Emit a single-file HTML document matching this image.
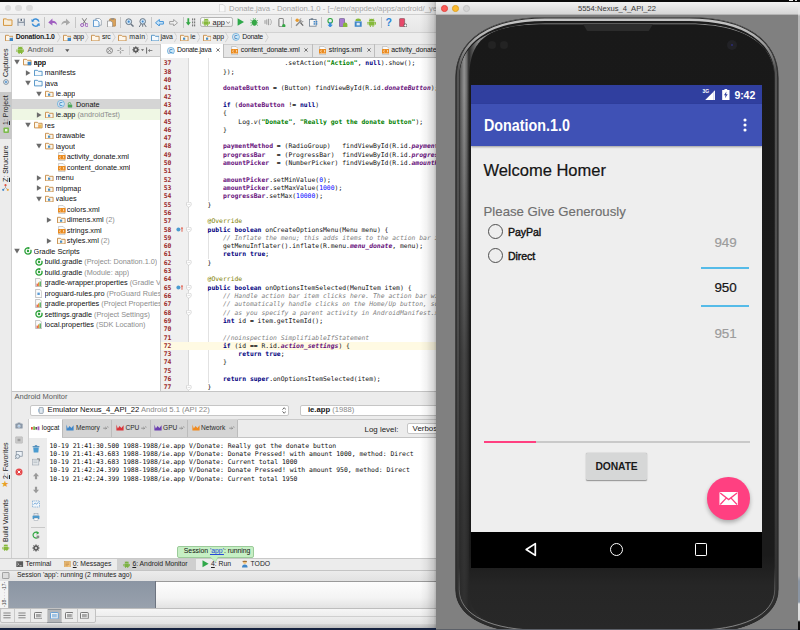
<!DOCTYPE html>
<html><head><meta charset="utf-8"><title>Donate.java - Donation.1.0</title>
<style>
*{margin:0;padding:0;box-sizing:border-box}
html,body{width:800px;height:630px;overflow:hidden;background:#1b2a4a}
body{position:relative;font-family:"Liberation Sans", sans-serif;color:#111}
.a{position:absolute}
.t{position:absolute;white-space:pre;line-height:1}
/* IDE */
#ide{position:absolute;left:0;top:0;width:437px;height:630px;background:#ececec;overflow:hidden}
.ui{font-size:7.3px;color:#1a1a1a}
.tree .t{font-size:7.3px;color:#111;height:10.5px;line-height:10.5px}
.tree .g{color:#8c8c8c}
.code{font-family:"DejaVu Sans Mono", "Liberation Mono", monospace;font-size:6.4px;}
.code .ln{position:absolute;left:192.2px;white-space:pre;height:8.308px;line-height:8.308px;color:#111}
.code .no{position:absolute;left:163.7px;white-space:pre;height:8.308px;line-height:8.308px;color:#9b2a2a;font-weight:bold;font-size:6.4px}
.k{color:#000080;font-weight:bold}
.s{color:#008000;font-weight:bold}
.f{color:#660e7a;font-weight:bold}
.fi{color:#660e7a;font-weight:bold;font-style:italic}
.c{color:#808080;font-style:italic}
.n{color:#0000ff}
.an{color:#808000}
.log{font-family:"DejaVu Sans Mono", "Liberation Mono", monospace;font-size:6.45px;color:#111}
.log .t{height:8.25px;line-height:8.25px}
.vt{position:absolute;white-space:pre;font-size:7px;color:#222;transform-origin:0 0;transform:rotate(-90deg);line-height:10px;height:10px}
/* phone */
#emu{position:absolute;left:436.2px;top:0;width:364px;height:630px;overflow:hidden}
</style></head>
<body>
<div id="ide">
<div class="a" style="left:0.00px;top:0.00px;width:437.00px;height:1.60px;background:#0b0b0b;"></div>
<div class="a" style="left:0.00px;top:1.60px;width:437.00px;height:12.40px;background:linear-gradient(#f7f7f7,#f1f1f1);"></div>
<div class="a" style="left:4.50px;top:4.70px;width:6.80px;height:6.80px;background:#dcdcdc;border-radius:50%"></div>
<div class="a" style="left:15.40px;top:4.70px;width:6.80px;height:6.80px;background:#dcdcdc;border-radius:50%"></div>
<div class="a" style="left:26.20px;top:4.70px;width:6.80px;height:6.80px;background:#dcdcdc;border-radius:50%"></div>
<svg class="a" style="left:219.30px;top:3.60px" width="6.4" height="8.4" viewBox="0 0 6.4 8.4"><path d="M0.4 0.4h3.6l2 2v5.6h-5.6z" fill="#fafafa" stroke="#c4c4c4" stroke-width="0.6"/></svg>
<div class="t" style="left:229.10px;top:4.50px;font-size:7.7px;color:#a4a4a4;letter-spacing:0.002px">Donate.java - Donation.1.0 - [~/env/appdev/apps/android/_yea</div>
<div class="a" style="left:0.00px;top:14.00px;width:437.00px;height:17.60px;background:linear-gradient(#efefef,#e7e7e7);border-top:0.5px solid #d0d0d0"></div>
<div class="a" style="left:44.20px;top:16.50px;width:0.60px;height:11.50px;background:#c6c6c6;"></div>
<div class="a" style="left:75.30px;top:16.50px;width:0.60px;height:11.50px;background:#c6c6c6;"></div>
<div class="a" style="left:119.90px;top:16.50px;width:0.60px;height:11.50px;background:#c6c6c6;"></div>
<div class="a" style="left:151.30px;top:16.50px;width:0.60px;height:11.50px;background:#c6c6c6;"></div>
<div class="a" style="left:182.50px;top:16.50px;width:0.60px;height:11.50px;background:#c6c6c6;"></div>
<div class="a" style="left:291.20px;top:16.50px;width:0.60px;height:11.50px;background:#c6c6c6;"></div>
<div class="a" style="left:321.20px;top:16.50px;width:0.60px;height:11.50px;background:#c6c6c6;"></div>
<div class="a" style="left:380.70px;top:16.50px;width:0.60px;height:11.50px;background:#c6c6c6;"></div>
<svg class="a" style="left:3.20px;top:18.30px" width="9.6" height="8" viewBox="0 0 9.6 8"><path d="M0.5 0.9h3l0.9 1h4.6v5.5h-8.5z" fill="#f7ecd8" stroke="#d5973f" stroke-width="1" stroke-linejoin="round"/></svg>
<svg class="a" style="left:17.00px;top:18.10px" width="8.4" height="8.4" viewBox="0 0 8.4 8.4"><rect x="0.4" y="0.4" width="7.6" height="7.6" rx="0.7" fill="#8d98a6"/><rect x="1.8" y="0.4" width="4.8" height="3.2" fill="#f3f3f3"/><rect x="3.6" y="0.9" width="1.3" height="2" fill="#3e4e63"/><rect x="1.5" y="5" width="5.4" height="3" fill="#dfe3e8"/></svg>
<svg class="a" style="left:31.00px;top:17.70px" width="9.2" height="9.2" viewBox="0 0 9.2 9.2"><path d="M7.9 3.6A3.5 3.5 0 0 0 1.6 2.6M1.3 5.6A3.5 3.5 0 0 0 7.6 6.6" fill="none" stroke="#3a8ed8" stroke-width="1.5"/><path d="M0.2 1.2l0.6 3 2.8-1.2zM9 8l-0.6-3-2.8 1.2z" fill="#3a8ed8"/></svg>
<svg class="a" style="left:48.40px;top:18.30px" width="9.4" height="8" viewBox="0 0 9.4 8"><path d="M0.3 4.4L4.4 0.6v2.2c3 0 4.6 1.6 4.6 4.4-1-1.7-2.3-2.2-4.6-2.2v2.4z" fill="#a05fc0"/></svg>
<svg class="a" style="left:61.40px;top:18.30px" width="9.4" height="8" viewBox="0 0 9.4 8"><path d="M9.1 4.4L5 0.6v2.2c-3 0-4.6 1.6-4.6 4.4 1-1.7 2.3-2.2 4.6-2.2v2.4z" fill="#a9a9a9"/></svg>
<svg class="a" style="left:79.60px;top:17.70px" width="8.8" height="9.2" viewBox="0 0 8.8 9.2"><path d="M2.2 0.3L6 6M6.6 0.3L2.8 6" stroke="#6e6e6e" stroke-width="0.9"/><circle cx="2.1" cy="7.1" r="1.5" fill="none" stroke="#a05fc0" stroke-width="1"/><circle cx="6.7" cy="7.1" r="1.5" fill="none" stroke="#a05fc0" stroke-width="1"/></svg>
<svg class="a" style="left:93.20px;top:17.70px" width="8.8" height="9.2" viewBox="0 0 8.8 9.2"><path d="M2.8 0.5h3.6l1.9 1.9v4.8h-5.5z" fill="#fff" stroke="#7d8a98" stroke-width="0.7"/><path d="M0.5 2.2h3.6l1.9 1.9v4.6h-5.5z" fill="#f3f8fd" stroke="#3f86c8" stroke-width="0.8"/></svg>
<svg class="a" style="left:107.40px;top:17.50px" width="9" height="9.6" viewBox="0 0 9 9.6"><rect x="2.6" y="0.8" width="6" height="7.4" rx="0.6" fill="#d9a25a" stroke="#a9743a" stroke-width="0.6"/><rect x="4.2" y="0.2" width="2.8" height="1.4" fill="#8a8a8a"/><path d="M0.5 3h3.4l1.7 1.7v4.5h-5.1z" fill="#fafafa" stroke="#8a8a8a" stroke-width="0.7"/></svg>
<svg class="a" style="left:124.60px;top:17.70px" width="9" height="9.2" viewBox="0 0 9 9.2"><circle cx="3.7" cy="3.7" r="2.9" fill="#cfe6f8" stroke="#6b7683" stroke-width="1"/><path d="M5.9 5.9l2.6 2.7" stroke="#6b7683" stroke-width="1.4"/><circle cx="3.7" cy="3.7" r="1.1" fill="#3f86c8"/></svg>
<svg class="a" style="left:138.00px;top:17.70px" width="9.4" height="9.4" viewBox="0 0 9.4 9.4"><circle cx="4.7" cy="3.4" r="2.8" fill="#cfe6f8" stroke="#6b7683" stroke-width="1"/><circle cx="4.7" cy="3.4" r="1" fill="#3f86c8"/><path d="M3.2 5.8L1.2 9M6.2 5.8l2 3.2M4.7 6.2v2.6" stroke="#6b7683" stroke-width="1"/></svg>
<svg class="a" style="left:155.20px;top:18.50px" width="9" height="7.6" viewBox="0 0 9 7.6"><path d="M0.5 3.8L4.4 0.5v2h4v2.6h-4v2z" fill="#c7e2f6" stroke="#3a8ed8" stroke-width="0.9" stroke-linejoin="round"/></svg>
<svg class="a" style="left:169.30px;top:18.50px" width="9" height="7.6" viewBox="0 0 9 7.6"><path d="M8.5 3.8L4.6 0.5v2h-4v2.6h4v2z" fill="#efefef" stroke="#9a9a9a" stroke-width="0.9" stroke-linejoin="round"/></svg>
<svg class="a" style="left:186.20px;top:17.90px" width="9.6" height="8.8" viewBox="0 0 9.6 8.8"><path d="M1.4 0.2h1.8v4h1.6L2.3 7.6-0.2 4.2h1.6z" fill="#35a745"/><g fill="#7a7a7a"><rect x="6" y="0.4" width="1.2" height="2"/><rect x="8" y="0.4" width="1.2" height="2"/><rect x="6" y="3.4" width="1.2" height="2"/><rect x="8" y="3.4" width="1.2" height="2"/><rect x="6" y="6.4" width="1.2" height="2"/><rect x="8" y="6.4" width="1.2" height="2"/></g></svg>
<div class="a" style="left:199.70px;top:17.30px;width:33.70px;height:10.20px;background:linear-gradient(#fbfbfb,#e9e9e9);border:0.6px solid #b4b4b4;border-radius:2.2px"></div>
<svg class="a" style="left:202.40px;top:18.10px" width="8.4" height="8.4" viewBox="0 0 10 10"><path d="M2 3.4a3 2.6 0 0 1 6 0z" fill="#86b93b"/><rect x="2" y="3.8" width="6" height="4.2" rx="0.6" fill="#86b93b"/><rect x="0.5" y="3.9" width="1.1" height="3.2" rx="0.5" fill="#86b93b"/><rect x="8.4" y="3.9" width="1.1" height="3.2" rx="0.5" fill="#86b93b"/><rect x="3" y="7.6" width="1.2" height="2" rx="0.5" fill="#86b93b"/><rect x="5.8" y="7.6" width="1.2" height="2" rx="0.5" fill="#86b93b"/><path d="M2.8 0.4l0.9 1.3M7.2 0.4L6.3 1.7" stroke="#86b93b" stroke-width="0.5"/></svg>
<div class="t" style="left:212.60px;top:18.60px;font-size:7.4px;color:#222">app</div>
<svg class="a" style="left:225.60px;top:21.10px" width="4.4" height="3" viewBox="0 0 4.4 3"><path d="M0.3 0.4L2.2 2.5 4.1 0.4" fill="none" stroke="#6a6a6a" stroke-width="0.8"/></svg>
<svg class="a" style="left:237.00px;top:18.30px" width="7.4" height="8" viewBox="0 0 7.4 8"><path d="M0.6 0.3L7 4 0.6 7.7z" fill="#2fa84a"/></svg>
<svg class="a" style="left:249.60px;top:18.10px" width="8.8" height="8.4" viewBox="0 0 8.8 8.4"><ellipse cx="4.4" cy="4.6" rx="2.5" ry="3.1" fill="#35a745"/><path d="M0.4 2l2 1.4M8.4 2l-2 1.4M0.2 4.8h2M8.6 4.8h-2M0.6 7.8l1.8-1.4M8.2 7.8L6.4 6.4M3.2 0.2l0.6 1.3M5.6 0.2L5 1.5" stroke="#35a745" stroke-width="0.7"/></svg>
<svg class="a" style="left:263.60px;top:18.30px" width="9" height="8" viewBox="0 0 9 8"><path d="M1 2.2v3.6M2.8 1.4v5.2M4.6 0.8v6.4" stroke="#9a9a9a" stroke-width="1"/><path d="M6 1a4 4 0 0 1 0 6" fill="none" stroke="#b4b4b4" stroke-width="1"/></svg>
<svg class="a" style="left:278.00px;top:17.50px" width="7.6" height="9.6" viewBox="0 0 7.6 9.6"><rect x="0.9" y="0.4" width="4.4" height="8.4" rx="0.8" fill="#f1f1f1" stroke="#5b5b5b" stroke-width="0.8"/><circle cx="5.8" cy="7.8" r="1.7" fill="#35a745"/></svg>
<svg class="a" style="left:294.60px;top:17.90px" width="9" height="8.8" viewBox="0 0 9 8.8"><path d="M1 7.8L6.4 2.2" stroke="#8b8b8b" stroke-width="1.4"/><circle cx="2.2" cy="2.2" r="1.7" fill="#e79a2e"/><path d="M5.4 4.6l2.8 3" stroke="#5f5f5f" stroke-width="1.2"/><path d="M6.2 0.6a1.8 1.8 0 1 0 2 2.4" fill="none" stroke="#8b8b8b" stroke-width="1"/></svg>
<svg class="a" style="left:309.00px;top:17.90px" width="9" height="8.8" viewBox="0 0 9 8.8"><rect x="0.5" y="1.4" width="6.6" height="6.8" fill="#f6f6f6" stroke="#6f7d8c" stroke-width="0.8"/><rect x="1.6" y="0.3" width="2.6" height="1.6" fill="#6f7d8c"/><g fill="#3f86c8"><rect x="4.6" y="3" width="1.5" height="1.5"/><rect x="6.8" y="3" width="1.5" height="1.5"/><rect x="4.6" y="5.2" width="1.5" height="1.5"/><rect x="6.8" y="5.2" width="1.5" height="1.5"/></g></svg>
<svg class="a" style="left:325.80px;top:17.50px" width="8.4" height="9.6" viewBox="0 0 8.4 9.6"><circle cx="4.2" cy="2.8" r="2.3" fill="none" stroke="#35a745" stroke-width="1.1"/><path d="M3 4.6h2.4v2.2h1.5L4.2 9.6 1.5 6.8H3z" fill="#3a8ed8"/></svg>
<svg class="a" style="left:339.20px;top:17.50px" width="8.8" height="9.6" viewBox="0 0 8.8 9.6"><rect x="0.5" y="0.4" width="5" height="8.4" rx="0.8" fill="#a77bd0" stroke="#6c5a8c" stroke-width="0.7"/><path d="M4 6.6a2.2 2 0 0 1 4.4 0v2.6H4z" fill="#86b93b"/></svg>
<svg class="a" style="left:353.80px;top:17.70px" width="8.4" height="9.4" viewBox="0 0 8.4 9.4"><path d="M1.4 3a2.8 2.4 0 0 1 5.6 0z" fill="#86b93b"/><rect x="0.7" y="3.4" width="7" height="5.4" fill="#3f86c8"/><rect x="2.6" y="4.8" width="3.2" height="2.6" fill="#dbeaf7"/></svg>
<svg class="a" style="left:367.30px;top:17.60px" width="9.4" height="9.4" viewBox="0 0 10 10"><path d="M2 3.4a3 2.6 0 0 1 6 0z" fill="#86b93b"/><rect x="2" y="3.8" width="6" height="4.2" rx="0.6" fill="#86b93b"/><rect x="0.5" y="3.9" width="1.1" height="3.2" rx="0.5" fill="#86b93b"/><rect x="8.4" y="3.9" width="1.1" height="3.2" rx="0.5" fill="#86b93b"/><rect x="3" y="7.6" width="1.2" height="2" rx="0.5" fill="#86b93b"/><rect x="5.8" y="7.6" width="1.2" height="2" rx="0.5" fill="#86b93b"/><path d="M2.8 0.4l0.9 1.3M7.2 0.4L6.3 1.7" stroke="#86b93b" stroke-width="0.5"/></svg>
<div class="t" style="left:385.60px;top:16.60px;font-size:10.5px;font-weight:bold;color:#2f86d6">?</div>
<svg class="a" style="left:398.60px;top:17.50px" width="8.6" height="9.6" viewBox="0 0 8.6 9.6"><rect x="0.6" y="0.4" width="5" height="8.4" rx="0.8" fill="#e8486a" stroke="#8a5560" stroke-width="0.7"/><circle cx="6.4" cy="7.4" r="1.5" fill="#fff" stroke="#444" stroke-width="0.7"/></svg>
<div class="a" style="left:0.00px;top:31.60px;width:437.00px;height:12.00px;background:#ededed;border-top:0.5px solid #d2d2d2"></div>
<svg class="a" style="left:4.80px;top:33.50px" width="8.6" height="7.4" viewBox="0 0 8.6 7.4"><path d="M0.5 1.3h3l0.9 1h3.7v4.6h-7.6z" fill="#fdf6ea" stroke="#c58a45" stroke-width="0.9" stroke-linejoin="round"/><rect x="4.6" y="3.8" width="3.6" height="3.4" fill="#3d86c6"/></svg>
<div class="t" style="left:15.75px;top:34.10px;font-size:6.9px;color:#1a1a1a;letter-spacing:-0.196px;font-weight:bold;">Donation.1.0</div>
<svg class="a" style="left:57.20px;top:32.20px" width="3.6" height="10.4" viewBox="0 0 3.6 10.4"><path d="M0.3 0.2L3.2 5.2 0.3 10.2" fill="none" stroke="#bdbdbd" stroke-width="0.6"/></svg>
<svg class="a" style="left:62.55px;top:33.50px" width="8.6" height="7.4" viewBox="0 0 8.6 7.4"><path d="M0.5 1.3h3l0.9 1h3.7v4.6h-7.6z" fill="#fdf6ea" stroke="#c58a45" stroke-width="0.9" stroke-linejoin="round"/><rect x="4.6" y="3.8" width="3.6" height="3.4" fill="#3d86c6"/></svg>
<div class="t" style="left:73.15px;top:34.10px;font-size:6.9px;color:#1a1a1a;letter-spacing:-0.338px;">app</div>
<svg class="a" style="left:85.20px;top:32.20px" width="3.6" height="10.4" viewBox="0 0 3.6 10.4"><path d="M0.3 0.2L3.2 5.2 0.3 10.2" fill="none" stroke="#bdbdbd" stroke-width="0.6"/></svg>
<svg class="a" style="left:91.10px;top:33.50px" width="8.6" height="7.4" viewBox="0 0 8.6 7.4"><path d="M0.5 1.3h3l0.9 1h3.7v4.6h-7.6z" fill="#fdf6ea" stroke="#c58a45" stroke-width="0.9" stroke-linejoin="round"/></svg>
<div class="t" style="left:102.00px;top:34.10px;font-size:6.9px;color:#1a1a1a;letter-spacing:-0.199px;">src</div>
<svg class="a" style="left:112.30px;top:32.20px" width="3.6" height="10.4" viewBox="0 0 3.6 10.4"><path d="M0.3 0.2L3.2 5.2 0.3 10.2" fill="none" stroke="#bdbdbd" stroke-width="0.6"/></svg>
<svg class="a" style="left:118.20px;top:33.50px" width="8.6" height="7.4" viewBox="0 0 8.6 7.4"><path d="M0.5 1.3h3l0.9 1h3.7v4.6h-7.6z" fill="#fdf6ea" stroke="#c58a45" stroke-width="0.9" stroke-linejoin="round"/></svg>
<div class="t" style="left:129.20px;top:34.10px;font-size:6.9px;color:#1a1a1a;letter-spacing:0.311px;">main</div>
<svg class="a" style="left:144.70px;top:32.20px" width="3.6" height="10.4" viewBox="0 0 3.6 10.4"><path d="M0.3 0.2L3.2 5.2 0.3 10.2" fill="none" stroke="#bdbdbd" stroke-width="0.6"/></svg>
<svg class="a" style="left:150.70px;top:33.50px" width="8.6" height="7.4" viewBox="0 0 8.6 7.4"><path d="M0.5 1.3h3l0.9 1h3.7v4.6h-7.6z" fill="#f4f9fd" stroke="#4b8fc4" stroke-width="0.9" stroke-linejoin="round"/></svg>
<div class="t" style="left:160.60px;top:34.10px;font-size:6.9px;color:#1a1a1a;letter-spacing:-0.115px;">java</div>
<svg class="a" style="left:173.90px;top:32.20px" width="3.6" height="10.4" viewBox="0 0 3.6 10.4"><path d="M0.3 0.2L3.2 5.2 0.3 10.2" fill="none" stroke="#bdbdbd" stroke-width="0.6"/></svg>
<svg class="a" style="left:180.20px;top:33.50px" width="8.6" height="7.4" viewBox="0 0 8.6 7.4"><path d="M0.5 1.3h3l0.9 1h3.7v4.6h-7.6z" fill="#fdf6ea" stroke="#c58a45" stroke-width="0.9" stroke-linejoin="round"/><rect x="3" y="3.6" width="2.2" height="2.2" fill="#4b8fc4"/></svg>
<div class="t" style="left:190.30px;top:34.10px;font-size:6.9px;color:#1a1a1a;letter-spacing:-0.185px;">ie</div>
<svg class="a" style="left:196.50px;top:32.20px" width="3.6" height="10.4" viewBox="0 0 3.6 10.4"><path d="M0.3 0.2L3.2 5.2 0.3 10.2" fill="none" stroke="#bdbdbd" stroke-width="0.6"/></svg>
<svg class="a" style="left:202.70px;top:33.50px" width="8.6" height="7.4" viewBox="0 0 8.6 7.4"><path d="M0.5 1.3h3l0.9 1h3.7v4.6h-7.6z" fill="#fdf6ea" stroke="#c58a45" stroke-width="0.9" stroke-linejoin="round"/><rect x="3" y="3.6" width="2.2" height="2.2" fill="#4b8fc4"/></svg>
<div class="t" style="left:212.80px;top:34.10px;font-size:6.9px;color:#1a1a1a;letter-spacing:-0.138px;">app</div>
<svg class="a" style="left:225.00px;top:32.20px" width="3.6" height="10.4" viewBox="0 0 3.6 10.4"><path d="M0.3 0.2L3.2 5.2 0.3 10.2" fill="none" stroke="#bdbdbd" stroke-width="0.6"/></svg>
<svg class="a" style="left:232.10px;top:33.30px" width="7.8" height="7.8" viewBox="0 0 7.8 7.8"><circle cx="3.9" cy="3.9" r="3.5" fill="#d4eaf8" stroke="#5aa2d6" stroke-width="0.7"/><text x="3.9" y="5.65" font-size="5" font-family="Liberation Sans, sans-serif" font-weight="bold" text-anchor="middle" fill="#3a7fb8">C</text></svg>
<div class="t" style="left:242.30px;top:34.10px;font-size:6.9px;color:#1a1a1a;letter-spacing:-0.275px;">Donate</div>
<svg class="a" style="left:265.30px;top:32.20px" width="3.6" height="10.4" viewBox="0 0 3.6 10.4"><path d="M0.3 0.2L3.2 5.2 0.3 10.2" fill="none" stroke="#bdbdbd" stroke-width="0.6"/></svg>
<div class="a" style="left:0.00px;top:43.60px;width:11.60px;height:515.00px;background:#ececec;border-right:0.5px solid #cfcfcf"></div>
<div class="a" style="left:0.00px;top:91.80px;width:11.60px;height:47.20px;background:#c9c9c9;"></div>
<div class="vt" style="left:0.6px;top:77.2px;">Captures</div>
<svg class="a" style="left:2.60px;top:79.00px" width="6" height="6" viewBox="0 0 6 6"><circle cx="3" cy="3" r="2.4" fill="#dfeaf4" stroke="#6f7d8c" stroke-width="0.8"/><circle cx="3" cy="3" r="0.9" fill="#3f86c8"/></svg>
<div class="vt" style="left:0.6px;top:125.4px;"><u>1</u>: Project</div>
<svg class="a" style="left:2.60px;top:127.40px" width="6.4" height="6.4" viewBox="0 0 6.4 6.4"><rect x="0.4" y="0.4" width="5.6" height="5.6" rx="1" fill="#7dbb4d"/><rect x="2" y="2" width="2.4" height="2.4" fill="#e9f5df"/></svg>
<div class="vt" style="left:0.6px;top:182.0px;"><u>Z</u>: Structure</div>
<svg class="a" style="left:2.40px;top:183.60px" width="7" height="7" viewBox="0 0 7 7"><path d="M3.5 1.2v2.2M3.5 3.4L1.2 5.8M3.5 3.4l2.3 2.4" stroke="#8a8a8a" stroke-width="0.6"/><circle cx="3.5" cy="1.2" r="1.1" fill="#e0523f"/><circle cx="1.2" cy="5.8" r="1.1" fill="#3f86c8"/><circle cx="5.8" cy="5.8" r="1.1" fill="#e9a23b"/></svg>
<div class="vt" style="left:0.6px;top:479.4px;"><u>2</u>: Favorites</div>
<div class="t" style="left:1.20px;top:479.60px;font-size:8.6px;color:#e9a024">★</div>
<div class="vt" style="left:0.6px;top:541.6px;">Build Variants</div>
<svg class="a" style="left:2.00px;top:543.80px" width="7.6" height="7.6" viewBox="0 0 10 10"><path d="M2 3.4a3 2.6 0 0 1 6 0z" fill="#86b93b"/><rect x="2" y="3.8" width="6" height="4.2" rx="0.6" fill="#86b93b"/><rect x="0.5" y="3.9" width="1.1" height="3.2" rx="0.5" fill="#86b93b"/><rect x="8.4" y="3.9" width="1.1" height="3.2" rx="0.5" fill="#86b93b"/><rect x="3" y="7.6" width="1.2" height="2" rx="0.5" fill="#86b93b"/><rect x="5.8" y="7.6" width="1.2" height="2" rx="0.5" fill="#86b93b"/><path d="M2.8 0.4l0.9 1.3M7.2 0.4L6.3 1.7" stroke="#86b93b" stroke-width="0.5"/></svg>
<div class="a" style="left:11.60px;top:43.60px;width:149.00px;height:13.60px;background:#e9e9e9;border-top:0.5px solid #cfcfcf;border-bottom:0.5px solid #c9c9c9"></div>
<svg class="a" style="left:15.70px;top:45.90px" width="8.6" height="8.6" viewBox="0 0 10 10"><path d="M2 3.4a3 2.6 0 0 1 6 0z" fill="#86b93b"/><rect x="2" y="3.8" width="6" height="4.2" rx="0.6" fill="#86b93b"/><rect x="0.5" y="3.9" width="1.1" height="3.2" rx="0.5" fill="#86b93b"/><rect x="8.4" y="3.9" width="1.1" height="3.2" rx="0.5" fill="#86b93b"/><rect x="3" y="7.6" width="1.2" height="2" rx="0.5" fill="#86b93b"/><rect x="5.8" y="7.6" width="1.2" height="2" rx="0.5" fill="#86b93b"/><path d="M2.8 0.4l0.9 1.3M7.2 0.4L6.3 1.7" stroke="#86b93b" stroke-width="0.5"/></svg>
<div class="t" style="left:27.40px;top:46.40px;font-size:7.6px;color:#555">Android</div>
<svg class="a" style="left:65.40px;top:49.20px" width="4.6" height="3.2" viewBox="0 0 4.6 3.2"><path d="M0.2 0.3h4.2L2.3 2.9z" fill="#555"/></svg>
<svg class="a" style="left:105.60px;top:46.60px" width="7.2" height="7.2" viewBox="0 0 7.2 7.2"><circle cx="3.6" cy="3.6" r="2.9" fill="none" stroke="#7a7a7a" stroke-width="0.9"/><path d="M2.3 2.3l2.6 2.6M4.9 2.3L2.3 4.9" stroke="#7a7a7a" stroke-width="0.8"/></svg>
<svg class="a" style="left:117.20px;top:46.60px" width="7" height="7" viewBox="0 0 7 7"><path d="M3.5 0.3v2.2M3.5 6.7V4.5M0.3 3.5h2.2M6.7 3.5H4.5" stroke="#8a8a8a" stroke-width="0.7"/><path d="M2.6 1.6l0.9 0.9 0.9-0.9M2.6 5.4l0.9-0.9 0.9 0.9" fill="none" stroke="#8a8a8a" stroke-width="0.6"/></svg>
<div class="a" style="left:128.60px;top:46.00px;width:0.50px;height:9.00px;background:#cfcfcf;"></div>
<svg class="a" style="left:132.40px;top:46.40px" width="7.6" height="7.6" viewBox="0 0 7.6 7.6"><circle cx="3.8" cy="3.8" r="2" fill="none" stroke="#5a5a5a" stroke-width="1.5"/><path d="M3.8 0.2v7.2M0.2 3.8h7.2M1.3 1.3l5 5M6.3 1.3l-5 5" stroke="#5a5a5a" stroke-width="0.9"/><circle cx="3.8" cy="3.8" r="1" fill="#e9e9e9"/></svg>
<svg class="a" style="left:141.00px;top:49.40px" width="3" height="2" viewBox="0 0 3 2"><path d="M0 0.2h3L1.5 1.9z" fill="#5a5a5a"/></svg>
<svg class="a" style="left:146.00px;top:46.80px" width="7" height="7" viewBox="0 0 7 7"><path d="M0.6 0.4v6.2" stroke="#5a5a5a" stroke-width="0.9"/><path d="M6.4 3.5H2.6M4 2.2L2.6 3.5 4 4.8" fill="none" stroke="#5a5a5a" stroke-width="0.7"/></svg>
<div class="a" style="left:11.60px;top:57.20px;width:149.00px;height:333.60px;background:#ffffff;"></div>
<div class="a" style="left:160.20px;top:43.60px;width:0.60px;height:347.00px;background:#c9c9c9;"></div>
<div class="tree">
<svg class="a" style="left:13.50px;top:59.10px" width="6" height="6" viewBox="0 0 6 6"><path d="M0.2 0.8h5.6L3 5.4z" fill="#6b6b6b"/></svg>
<svg class="a" style="left:23.20px;top:58.40px" width="8.6" height="7.4" viewBox="0 0 8.6 7.4"><path d="M0.5 1.3h3l0.9 1h3.7v4.6h-7.6z" fill="#fdf6ea" stroke="#c58a45" stroke-width="0.9" stroke-linejoin="round"/><rect x="4.6" y="3.8" width="3.6" height="3.4" fill="#3d86c6"/></svg>
<div class="t" style="left:33.50px;top:57.55px;max-width:126.7px;overflow:hidden;font-weight:bold;letter-spacing:-0.15px;">app</div>
<svg class="a" style="left:24.50px;top:69.61px" width="6" height="6" viewBox="0 0 6 6"><path d="M0.9 0.2v5.6L5.5 3z" fill="#6b6b6b"/></svg>
<svg class="a" style="left:34.20px;top:68.91px" width="8.6" height="7.4" viewBox="0 0 8.6 7.4"><path d="M0.5 1.3h3l0.9 1h3.7v4.6h-7.6z" fill="#f4f9fd" stroke="#4b8fc4" stroke-width="0.9" stroke-linejoin="round"/></svg>
<div class="t" style="left:44.50px;top:68.06px;max-width:115.7px;overflow:hidden;">manifests</div>
<svg class="a" style="left:24.50px;top:80.12px" width="6" height="6" viewBox="0 0 6 6"><path d="M0.2 0.8h5.6L3 5.4z" fill="#6b6b6b"/></svg>
<svg class="a" style="left:34.20px;top:79.42px" width="8.6" height="7.4" viewBox="0 0 8.6 7.4"><path d="M0.5 1.3h3l0.9 1h3.7v4.6h-7.6z" fill="#f4f9fd" stroke="#4b8fc4" stroke-width="0.9" stroke-linejoin="round"/></svg>
<div class="t" style="left:44.50px;top:78.57px;max-width:115.7px;overflow:hidden;">java</div>
<svg class="a" style="left:35.50px;top:90.63px" width="6" height="6" viewBox="0 0 6 6"><path d="M0.2 0.8h5.6L3 5.4z" fill="#6b6b6b"/></svg>
<svg class="a" style="left:45.20px;top:89.93px" width="8.6" height="7.4" viewBox="0 0 8.6 7.4"><path d="M0.5 1.3h3l0.9 1h3.7v4.6h-7.6z" fill="#fdf6ea" stroke="#c58a45" stroke-width="0.9" stroke-linejoin="round"/><rect x="3" y="3.6" width="2.2" height="2.2" fill="#4b8fc4"/></svg>
<div class="t" style="left:55.50px;top:89.08px;max-width:104.7px;overflow:hidden;">ie.app</div>
<div class="a" style="left:11.60px;top:98.89px;width:148.60px;height:10.51px;background:#d5d5d5;"></div>
<svg class="a" style="left:57.10px;top:100.24px" width="7.8" height="7.8" viewBox="0 0 7.8 7.8"><circle cx="3.9" cy="3.9" r="3.5" fill="#d4eaf8" stroke="#5aa2d6" stroke-width="0.7"/><text x="3.9" y="5.65" font-size="5" font-family="Liberation Sans, sans-serif" font-weight="bold" text-anchor="middle" fill="#3a7fb8">C</text></svg>
<svg class="a" style="left:67.20px;top:101.54px" width="6" height="6" viewBox="0 0 6 6"><path d="M1.2 2.6V1.8a1.3 1.3 0 0 1 2.6 0" fill="none" stroke="#4aa657" stroke-width="0.8"/><rect x="0.8" y="2.6" width="4.4" height="3" rx="0.5" fill="#4aa657"/></svg>
<div class="t" style="left:76.00px;top:99.59px;max-width:84.2px;overflow:hidden;">Donate</div>
<div class="a" style="left:11.60px;top:109.40px;width:148.60px;height:10.51px;background:#eff7e4;"></div>
<svg class="a" style="left:35.50px;top:111.65px" width="6" height="6" viewBox="0 0 6 6"><path d="M0.9 0.2v5.6L5.5 3z" fill="#6b6b6b"/></svg>
<svg class="a" style="left:45.20px;top:110.95px" width="8.6" height="7.4" viewBox="0 0 8.6 7.4"><path d="M0.5 1.3h3l0.9 1h3.7v4.6h-7.6z" fill="#fdf6ea" stroke="#c58a45" stroke-width="0.9" stroke-linejoin="round"/><rect x="3" y="3.6" width="2.2" height="2.2" fill="#4b8fc4"/></svg>
<div class="t" style="left:55.50px;top:110.10px;max-width:104.7px;overflow:hidden;">ie.app <span class="g">(androidTest)</span></div>
<svg class="a" style="left:24.50px;top:122.16px" width="6" height="6" viewBox="0 0 6 6"><path d="M0.2 0.8h5.6L3 5.4z" fill="#6b6b6b"/></svg>
<svg class="a" style="left:34.20px;top:121.46px" width="8.6" height="7.4" viewBox="0 0 8.6 7.4"><path d="M0.5 1.3h3l0.9 1h3.7v4.6h-7.6z" fill="#fdf6ea" stroke="#c58a45" stroke-width="0.9" stroke-linejoin="round"/><rect x="4.4" y="3.4" width="1.3" height="3.4" fill="#e98b1f"/><rect x="6.2" y="3.4" width="1.3" height="3.4" fill="#e2b23a"/></svg>
<div class="t" style="left:44.50px;top:120.61px;max-width:115.7px;overflow:hidden;">res</div>
<svg class="a" style="left:45.20px;top:131.97px" width="8.6" height="7.4" viewBox="0 0 8.6 7.4"><path d="M0.5 1.3h3l0.9 1h3.7v4.6h-7.6z" fill="#fdf6ea" stroke="#c58a45" stroke-width="0.9" stroke-linejoin="round"/><rect x="3" y="3.6" width="2.2" height="2.2" fill="#4b8fc4"/></svg>
<div class="t" style="left:55.50px;top:131.11px;max-width:104.7px;overflow:hidden;">drawable</div>
<svg class="a" style="left:35.50px;top:143.18px" width="6" height="6" viewBox="0 0 6 6"><path d="M0.2 0.8h5.6L3 5.4z" fill="#6b6b6b"/></svg>
<svg class="a" style="left:45.20px;top:142.48px" width="8.6" height="7.4" viewBox="0 0 8.6 7.4"><path d="M0.5 1.3h3l0.9 1h3.7v4.6h-7.6z" fill="#fdf6ea" stroke="#c58a45" stroke-width="0.9" stroke-linejoin="round"/><rect x="3" y="3.6" width="2.2" height="2.2" fill="#4b8fc4"/></svg>
<div class="t" style="left:55.50px;top:141.62px;max-width:104.7px;overflow:hidden;">layout</div>
<svg class="a" style="left:58.00px;top:152.19px" width="7.6" height="9" viewBox="0 0 7.6 9"><path d="M0.6 0.4h4.4l2 2v6.2h-6.4z" fill="#fbfbfb" stroke="#a9a9a9" stroke-width="0.6"/><rect x="0" y="3" width="7.6" height="4.4" rx="0.6" fill="#ea8a1e"/><path d="M2.7 4.1L1.5 5.2l1.2 1.1M4.9 4.1l1.2 1.1-1.2 1.1" stroke="#fff" stroke-width="0.7" fill="none"/></svg>
<div class="t" style="left:66.80px;top:152.13px;max-width:93.4px;overflow:hidden;">activity_donate.xml</div>
<svg class="a" style="left:58.00px;top:162.70px" width="7.6" height="9" viewBox="0 0 7.6 9"><path d="M0.6 0.4h4.4l2 2v6.2h-6.4z" fill="#fbfbfb" stroke="#a9a9a9" stroke-width="0.6"/><rect x="0" y="3" width="7.6" height="4.4" rx="0.6" fill="#ea8a1e"/><path d="M2.7 4.1L1.5 5.2l1.2 1.1M4.9 4.1l1.2 1.1-1.2 1.1" stroke="#fff" stroke-width="0.7" fill="none"/></svg>
<div class="t" style="left:66.80px;top:162.64px;max-width:93.4px;overflow:hidden;">content_donate.xml</div>
<svg class="a" style="left:35.50px;top:174.71px" width="6" height="6" viewBox="0 0 6 6"><path d="M0.9 0.2v5.6L5.5 3z" fill="#6b6b6b"/></svg>
<svg class="a" style="left:45.20px;top:174.01px" width="8.6" height="7.4" viewBox="0 0 8.6 7.4"><path d="M0.5 1.3h3l0.9 1h3.7v4.6h-7.6z" fill="#fdf6ea" stroke="#c58a45" stroke-width="0.9" stroke-linejoin="round"/><rect x="3" y="3.6" width="2.2" height="2.2" fill="#4b8fc4"/></svg>
<div class="t" style="left:55.50px;top:173.16px;max-width:104.7px;overflow:hidden;">menu</div>
<svg class="a" style="left:35.50px;top:185.22px" width="6" height="6" viewBox="0 0 6 6"><path d="M0.9 0.2v5.6L5.5 3z" fill="#6b6b6b"/></svg>
<svg class="a" style="left:45.20px;top:184.52px" width="8.6" height="7.4" viewBox="0 0 8.6 7.4"><path d="M0.5 1.3h3l0.9 1h3.7v4.6h-7.6z" fill="#fdf6ea" stroke="#c58a45" stroke-width="0.9" stroke-linejoin="round"/><rect x="3" y="3.6" width="2.2" height="2.2" fill="#4b8fc4"/></svg>
<div class="t" style="left:55.50px;top:183.66px;max-width:104.7px;overflow:hidden;">mipmap</div>
<svg class="a" style="left:35.50px;top:195.73px" width="6" height="6" viewBox="0 0 6 6"><path d="M0.2 0.8h5.6L3 5.4z" fill="#6b6b6b"/></svg>
<svg class="a" style="left:45.20px;top:195.03px" width="8.6" height="7.4" viewBox="0 0 8.6 7.4"><path d="M0.5 1.3h3l0.9 1h3.7v4.6h-7.6z" fill="#fdf6ea" stroke="#c58a45" stroke-width="0.9" stroke-linejoin="round"/><rect x="3" y="3.6" width="2.2" height="2.2" fill="#4b8fc4"/></svg>
<div class="t" style="left:55.50px;top:194.17px;max-width:104.7px;overflow:hidden;">values</div>
<svg class="a" style="left:58.00px;top:204.74px" width="7.6" height="9" viewBox="0 0 7.6 9"><path d="M0.6 0.4h4.4l2 2v6.2h-6.4z" fill="#fbfbfb" stroke="#a9a9a9" stroke-width="0.6"/><rect x="0" y="3" width="7.6" height="4.4" rx="0.6" fill="#ea8a1e"/><path d="M2.7 4.1L1.5 5.2l1.2 1.1M4.9 4.1l1.2 1.1-1.2 1.1" stroke="#fff" stroke-width="0.7" fill="none"/></svg>
<div class="t" style="left:66.80px;top:204.68px;max-width:93.4px;overflow:hidden;">colors.xml</div>
<svg class="a" style="left:46.40px;top:216.75px" width="6" height="6" viewBox="0 0 6 6"><path d="M0.9 0.2v5.6L5.5 3z" fill="#6b6b6b"/></svg>
<svg class="a" style="left:57.30px;top:216.05px" width="8.6" height="7.4" viewBox="0 0 8.6 7.4"><path d="M0.5 1.3h3l0.9 1h3.7v4.6h-7.6z" fill="#fdf6ea" stroke="#c58a45" stroke-width="0.9" stroke-linejoin="round"/><rect x="3" y="3.6" width="2.2" height="2.2" fill="#4b8fc4"/></svg>
<div class="t" style="left:66.80px;top:215.19px;max-width:93.4px;overflow:hidden;">dimens.xml <span class="g">(2)</span></div>
<svg class="a" style="left:58.00px;top:225.76px" width="7.6" height="9" viewBox="0 0 7.6 9"><path d="M0.6 0.4h4.4l2 2v6.2h-6.4z" fill="#fbfbfb" stroke="#a9a9a9" stroke-width="0.6"/><rect x="0" y="3" width="7.6" height="4.4" rx="0.6" fill="#ea8a1e"/><path d="M2.7 4.1L1.5 5.2l1.2 1.1M4.9 4.1l1.2 1.1-1.2 1.1" stroke="#fff" stroke-width="0.7" fill="none"/></svg>
<div class="t" style="left:66.80px;top:225.70px;max-width:93.4px;overflow:hidden;">strings.xml</div>
<svg class="a" style="left:46.40px;top:237.77px" width="6" height="6" viewBox="0 0 6 6"><path d="M0.9 0.2v5.6L5.5 3z" fill="#6b6b6b"/></svg>
<svg class="a" style="left:57.30px;top:237.07px" width="8.6" height="7.4" viewBox="0 0 8.6 7.4"><path d="M0.5 1.3h3l0.9 1h3.7v4.6h-7.6z" fill="#fdf6ea" stroke="#c58a45" stroke-width="0.9" stroke-linejoin="round"/><rect x="3" y="3.6" width="2.2" height="2.2" fill="#4b8fc4"/></svg>
<div class="t" style="left:66.80px;top:236.21px;max-width:93.4px;overflow:hidden;">styles.xml <span class="g">(2)</span></div>
<svg class="a" style="left:13.50px;top:248.28px" width="6" height="6" viewBox="0 0 6 6"><path d="M0.2 0.8h5.6L3 5.4z" fill="#6b6b6b"/></svg>
<svg class="a" style="left:23.50px;top:247.28px" width="8" height="8" viewBox="0 0 8 8"><circle cx="4" cy="4" r="3.1" fill="none" stroke="#2fa23c" stroke-width="1.3"/><rect x="4.6" y="-0.2" width="3.6" height="3" fill="#fff"/><path d="M3.6 -0.3L6.3 1 3.6 2.6z" fill="#2fa23c"/><circle cx="4" cy="4" r="1.2" fill="#2fa23c"/></svg>
<div class="t" style="left:33.50px;top:246.72px;max-width:126.7px;overflow:hidden;">Gradle Scripts</div>
<svg class="a" style="left:34.50px;top:257.79px" width="8" height="8" viewBox="0 0 8 8"><circle cx="4" cy="4" r="3.1" fill="none" stroke="#2fa23c" stroke-width="1.3"/><rect x="4.6" y="-0.2" width="3.6" height="3" fill="#fff"/><path d="M3.6 -0.3L6.3 1 3.6 2.6z" fill="#2fa23c"/><circle cx="4" cy="4" r="1.2" fill="#2fa23c"/></svg>
<div class="t" style="left:44.50px;top:257.24px;max-width:115.7px;overflow:hidden;">build.gradle <span class="g">(Project: Donation.1.0)</span></div>
<svg class="a" style="left:34.50px;top:268.30px" width="8" height="8" viewBox="0 0 8 8"><circle cx="4" cy="4" r="3.1" fill="none" stroke="#2fa23c" stroke-width="1.3"/><rect x="4.6" y="-0.2" width="3.6" height="3" fill="#fff"/><path d="M3.6 -0.3L6.3 1 3.6 2.6z" fill="#2fa23c"/><circle cx="4" cy="4" r="1.2" fill="#2fa23c"/></svg>
<div class="t" style="left:44.50px;top:267.75px;max-width:115.7px;overflow:hidden;">build.gradle <span class="g">(Module: app)</span></div>
<svg class="a" style="left:34.80px;top:278.31px" width="7.4" height="9" viewBox="0 0 7.4 9"><path d="M0.6 0.4h4.2l2 2v6.2h-6.2z" fill="#fbfbfb" stroke="#9a9a9a" stroke-width="0.6"/><rect x="1.6" y="5.6" width="1.2" height="2.6" fill="#d9453b"/><rect x="3.1" y="4.4" width="1.2" height="3.8" fill="#e98b1f"/><rect x="4.6" y="3.4" width="1.2" height="4.8" fill="#3ba14a"/></svg>
<div class="t" style="left:44.50px;top:278.25px;max-width:115.7px;overflow:hidden;">gradle-wrapper.properties <span class="g">(Gradle Version)</span></div>
<svg class="a" style="left:34.80px;top:288.82px" width="7.4" height="9" viewBox="0 0 7.4 9"><path d="M0.6 0.4h4.2l2 2v6.2h-6.2z" fill="#fbfbfb" stroke="#9a9a9a" stroke-width="0.6"/><rect x="2.4" y="3.6" width="2.4" height="2.4" fill="#5b9bd5"/></svg>
<div class="t" style="left:44.50px;top:288.76px;max-width:115.7px;overflow:hidden;">proguard-rules.pro <span class="g">(ProGuard Rules for app)</span></div>
<svg class="a" style="left:34.80px;top:299.33px" width="7.4" height="9" viewBox="0 0 7.4 9"><path d="M0.6 0.4h4.2l2 2v6.2h-6.2z" fill="#fbfbfb" stroke="#9a9a9a" stroke-width="0.6"/><rect x="1.6" y="5.6" width="1.2" height="2.6" fill="#d9453b"/><rect x="3.1" y="4.4" width="1.2" height="3.8" fill="#e98b1f"/><rect x="4.6" y="3.4" width="1.2" height="4.8" fill="#3ba14a"/></svg>
<div class="t" style="left:44.50px;top:299.27px;max-width:115.7px;overflow:hidden;">gradle.properties <span class="g">(Project Properties)</span></div>
<svg class="a" style="left:34.50px;top:310.34px" width="8" height="8" viewBox="0 0 8 8"><circle cx="4" cy="4" r="3.1" fill="none" stroke="#2fa23c" stroke-width="1.3"/><rect x="4.6" y="-0.2" width="3.6" height="3" fill="#fff"/><path d="M3.6 -0.3L6.3 1 3.6 2.6z" fill="#2fa23c"/><circle cx="4" cy="4" r="1.2" fill="#2fa23c"/></svg>
<div class="t" style="left:44.50px;top:309.79px;max-width:115.7px;overflow:hidden;">settings.gradle <span class="g">(Project Settings)</span></div>
<svg class="a" style="left:34.80px;top:320.35px" width="7.4" height="9" viewBox="0 0 7.4 9"><path d="M0.6 0.4h4.2l2 2v6.2h-6.2z" fill="#fbfbfb" stroke="#9a9a9a" stroke-width="0.6"/><rect x="1.6" y="5.6" width="1.2" height="2.6" fill="#d9453b"/><rect x="3.1" y="4.4" width="1.2" height="3.8" fill="#e98b1f"/><rect x="4.6" y="3.4" width="1.2" height="4.8" fill="#3ba14a"/></svg>
<div class="t" style="left:44.50px;top:320.30px;max-width:115.7px;overflow:hidden;">local.properties <span class="g">(SDK Location)</span></div>
</div>
<div class="a" style="left:160.80px;top:43.60px;width:276.20px;height:14.40px;background:#e6e6e6;border-top:0.5px solid #cfcfcf;border-bottom:0.6px solid #bdbdbd"></div>
<div class="a" style="left:161.00px;top:43.80px;width:63.00px;height:14.40px;background:#ffffff;border-right:0.5px solid #bdbdbd"></div>
<svg class="a" style="left:167.10px;top:46.50px" width="7.8" height="7.8" viewBox="0 0 7.8 7.8"><circle cx="3.9" cy="3.9" r="3.5" fill="#d4eaf8" stroke="#5aa2d6" stroke-width="0.7"/><text x="3.9" y="5.65" font-size="5" font-family="Liberation Sans, sans-serif" font-weight="bold" text-anchor="middle" fill="#3a7fb8">C</text></svg>
<div class="t" style="left:177.10px;top:46.90px;font-size:6.9px;color:#111;letter-spacing:-0.239px">Donate.java</div>
<svg class="a" style="left:215.50px;top:48.10px" width="4" height="4" viewBox="0 0 4 4"><path d="M0.4 0.4l3.2 3.2M3.6 0.4L0.4 3.6" stroke="#3c3c3c" stroke-width="0.7"/></svg>
<div class="a" style="left:312.30px;top:44.40px;width:0.60px;height:12.40px;background:#bdbdbd;"></div>
<svg class="a" style="left:230.90px;top:45.90px" width="7.6" height="9" viewBox="0 0 7.6 9"><path d="M0.6 0.4h4.4l2 2v6.2h-6.4z" fill="#fbfbfb" stroke="#a9a9a9" stroke-width="0.6"/><rect x="0" y="3" width="7.6" height="4.4" rx="0.6" fill="#ea8a1e"/><path d="M2.7 4.1L1.5 5.2l1.2 1.1M4.9 4.1l1.2 1.1-1.2 1.1" stroke="#fff" stroke-width="0.7" fill="none"/></svg>
<div class="t" style="left:240.75px;top:46.90px;font-size:6.9px;color:#111;letter-spacing:-0.068px">content_donate.xml</div>
<svg class="a" style="left:304.00px;top:48.10px" width="4" height="4" viewBox="0 0 4 4"><path d="M0.4 0.4l3.2 3.2M3.6 0.4L0.4 3.6" stroke="#3c3c3c" stroke-width="0.7"/></svg>
<div class="a" style="left:374.30px;top:44.40px;width:0.60px;height:12.40px;background:#bdbdbd;"></div>
<svg class="a" style="left:318.70px;top:45.90px" width="7.6" height="9" viewBox="0 0 7.6 9"><path d="M0.6 0.4h4.4l2 2v6.2h-6.4z" fill="#fbfbfb" stroke="#a9a9a9" stroke-width="0.6"/><rect x="0" y="3" width="7.6" height="4.4" rx="0.6" fill="#ea8a1e"/><path d="M2.7 4.1L1.5 5.2l1.2 1.1M4.9 4.1l1.2 1.1-1.2 1.1" stroke="#fff" stroke-width="0.7" fill="none"/></svg>
<div class="t" style="left:328.80px;top:46.90px;font-size:6.9px;color:#111;letter-spacing:0.039px">strings.xml</div>
<svg class="a" style="left:366.80px;top:48.10px" width="4" height="4" viewBox="0 0 4 4"><path d="M0.4 0.4l3.2 3.2M3.6 0.4L0.4 3.6" stroke="#3c3c3c" stroke-width="0.7"/></svg>
<div class="a" style="left:444.70px;top:44.40px;width:0.60px;height:12.40px;background:#bdbdbd;"></div>
<svg class="a" style="left:381.50px;top:45.90px" width="7.6" height="9" viewBox="0 0 7.6 9"><path d="M0.6 0.4h4.4l2 2v6.2h-6.4z" fill="#fbfbfb" stroke="#a9a9a9" stroke-width="0.6"/><rect x="0" y="3" width="7.6" height="4.4" rx="0.6" fill="#ea8a1e"/><path d="M2.7 4.1L1.5 5.2l1.2 1.1M4.9 4.1l1.2 1.1-1.2 1.1" stroke="#fff" stroke-width="0.7" fill="none"/></svg>
<div class="t" style="left:391.30px;top:46.90px;font-size:6.9px;color:#111;letter-spacing:-0.050px">activity_donate.xml</div>
<div class="a" style="left:160.80px;top:58.00px;width:276.20px;height:332.60px;background:#ffffff;"></div>
<div class="a" style="left:160.80px;top:58.00px;width:27.60px;height:332.60px;background:#f0f0f0;"></div>
<div class="a" style="left:188.40px;top:58.00px;width:0.60px;height:332.60px;background:#d9d9d9;"></div>
<div class="a" style="left:207.90px;top:58.00px;width:0.60px;height:142.58px;background:#e2e2e2;"></div>
<div class="a" style="left:207.90px;top:233.81px;width:0.60px;height:24.92px;background:#e2e2e2;"></div>
<div class="a" style="left:207.90px;top:291.97px;width:0.60px;height:91.39px;background:#e2e2e2;"></div>
<div class="code">
<div class="no" style="top:59.35px">37</div>
<div class="ln" style="top:59.35px">                        .setAction(<span class="s">"Action"</span>, <span class="k">null</span>).show();</div>
<div class="no" style="top:67.65px">38</div>
<div class="ln" style="top:67.65px">        });</div>
<div class="no" style="top:75.96px">40</div>
<div class="no" style="top:84.27px">41</div>
<div class="ln" style="top:84.27px">        <span class="f">donateButton</span> = (Button) findViewById(R.id.<span class="fi">donateButton</span>);</div>
<div class="no" style="top:92.58px">42</div>
<div class="no" style="top:100.89px">43</div>
<div class="ln" style="top:100.89px">        <span class="k">if</span> (<span class="f">donateButton</span> != <span class="k">null</span>)</div>
<div class="no" style="top:109.19px">44</div>
<div class="ln" style="top:109.19px">        {</div>
<div class="no" style="top:117.50px">45</div>
<div class="ln" style="top:117.50px">            Log.<i>v</i>(<span class="s">"Donate"</span>, <span class="s">"Really got the donate button"</span>);</div>
<div class="no" style="top:125.81px">46</div>
<div class="ln" style="top:125.81px">        }</div>
<div class="no" style="top:134.12px">47</div>
<div class="no" style="top:142.43px">48</div>
<div class="ln" style="top:142.43px">        <span class="f">paymentMethod</span> = (RadioGroup)   findViewById(R.id.<span class="fi">paymentMethod</span>);</div>
<div class="no" style="top:150.73px">49</div>
<div class="ln" style="top:150.73px">        <span class="f">progressBar</span>   = (ProgressBar)  findViewById(R.id.<span class="fi">progressBar</span>);</div>
<div class="no" style="top:159.04px">50</div>
<div class="ln" style="top:159.04px">        <span class="f">amountPicker</span>  = (NumberPicker) findViewById(R.id.<span class="fi">amountPicker</span>);</div>
<div class="no" style="top:167.35px">51</div>
<div class="no" style="top:175.66px">52</div>
<div class="ln" style="top:175.66px">        <span class="f">amountPicker</span>.setMinValue(<span class="n">0</span>);</div>
<div class="no" style="top:183.97px">53</div>
<div class="ln" style="top:183.97px">        <span class="f">amountPicker</span>.setMaxValue(<span class="n">1000</span>);</div>
<div class="no" style="top:192.27px">54</div>
<div class="ln" style="top:192.27px">        <span class="f">progressBar</span>.setMax(<span class="n">10000</span>);</div>
<div class="no" style="top:200.58px">55</div>
<div class="ln" style="top:200.58px">    }</div>
<svg class="a" style="left:186.00px;top:201.94px" width="5.6" height="5.6" viewBox="0 0 5.6 5.6"><path d="M0.5 1.2a1 1 0 0 1 1-1h2.6a1 1 0 0 1 1 1v2.2L2.8 5.3 0.5 3.4z" fill="#fff" stroke="#c3c3c3" stroke-width="0.6"/><path d="M1.6 2.4h2.4" stroke="#bdbdbd" stroke-width="0.5"/></svg>
<div class="no" style="top:208.89px">56</div>
<div class="no" style="top:217.20px">57</div>
<div class="ln" style="top:217.20px">    <span class="an">@Override</span></div>
<div class="no" style="top:225.51px">58</div>
<div class="ln" style="top:225.51px">    <span class="k">public boolean</span> onCreateOptionsMenu(Menu menu) {</div>
<svg class="a" style="left:175.60px;top:227.06px" width="8" height="5.2" viewBox="0 0 8 5.2"><circle cx="2.4" cy="2.6" r="2" fill="#4a9bd0"/><path d="M6 0.4v4.4" stroke="#e0523f" stroke-width="0.9"/><path d="M4.8 1.6L6 0.2l1.2 1.4z" fill="#e0523f"/></svg>
<svg class="a" style="left:186.00px;top:226.86px" width="5.6" height="5.6" viewBox="0 0 5.6 5.6"><path d="M0.5 1.2a1 1 0 0 1 1-1h2.6a1 1 0 0 1 1 1v2.2L2.8 5.3 0.5 3.4z" fill="#fff" stroke="#c3c3c3" stroke-width="0.6"/><path d="M1.6 2.4h2.4" stroke="#bdbdbd" stroke-width="0.5"/></svg>
<div class="no" style="top:233.81px">59</div>
<div class="ln" style="top:233.81px">        <span class="c">// Inflate the menu; this adds items to the action bar if it is present.</span></div>
<div class="no" style="top:242.12px">60</div>
<div class="ln" style="top:242.12px">        getMenuInflater().inflate(R.menu.<span class="fi">menu_donate</span>, menu);</div>
<div class="no" style="top:250.43px">61</div>
<div class="ln" style="top:250.43px">        <span class="k">return true</span>;</div>
<div class="no" style="top:258.74px">62</div>
<div class="ln" style="top:258.74px">    }</div>
<svg class="a" style="left:186.00px;top:260.09px" width="5.6" height="5.6" viewBox="0 0 5.6 5.6"><path d="M0.5 1.2a1 1 0 0 1 1-1h2.6a1 1 0 0 1 1 1v2.2L2.8 5.3 0.5 3.4z" fill="#fff" stroke="#c3c3c3" stroke-width="0.6"/><path d="M1.6 2.4h2.4" stroke="#bdbdbd" stroke-width="0.5"/></svg>
<div class="no" style="top:267.05px">63</div>
<div class="no" style="top:275.35px">64</div>
<div class="ln" style="top:275.35px">    <span class="an">@Override</span></div>
<div class="no" style="top:283.66px">65</div>
<div class="ln" style="top:283.66px">    <span class="k">public boolean</span> onOptionsItemSelected(MenuItem item) {</div>
<svg class="a" style="left:175.60px;top:285.22px" width="8" height="5.2" viewBox="0 0 8 5.2"><circle cx="2.4" cy="2.6" r="2" fill="#4a9bd0"/><path d="M6 0.4v4.4" stroke="#e0523f" stroke-width="0.9"/><path d="M4.8 1.6L6 0.2l1.2 1.4z" fill="#e0523f"/></svg>
<svg class="a" style="left:186.00px;top:285.02px" width="5.6" height="5.6" viewBox="0 0 5.6 5.6"><path d="M0.5 1.2a1 1 0 0 1 1-1h2.6a1 1 0 0 1 1 1v2.2L2.8 5.3 0.5 3.4z" fill="#fff" stroke="#c3c3c3" stroke-width="0.6"/><path d="M1.6 2.4h2.4" stroke="#bdbdbd" stroke-width="0.5"/></svg>
<div class="no" style="top:291.97px">66</div>
<div class="ln" style="top:291.97px">        <span class="c">// Handle action bar item clicks here. The action bar will</span></div>
<svg class="a" style="left:186.00px;top:293.32px" width="5.6" height="5.6" viewBox="0 0 5.6 5.6"><path d="M0.5 1.2a1 1 0 0 1 1-1h2.6a1 1 0 0 1 1 1v2.2L2.8 5.3 0.5 3.4z" fill="#fff" stroke="#c3c3c3" stroke-width="0.6"/><path d="M1.6 2.4h2.4" stroke="#bdbdbd" stroke-width="0.5"/></svg>
<div class="no" style="top:300.28px">67</div>
<div class="ln" style="top:300.28px">        <span class="c">// automatically handle clicks on the Home/Up button, so long</span></div>
<div class="no" style="top:308.59px">68</div>
<div class="ln" style="top:308.59px">        <span class="c">// as you specify a parent activity in AndroidManifest.xml.</span></div>
<svg class="a" style="left:186.00px;top:309.94px" width="5.6" height="5.6" viewBox="0 0 5.6 5.6"><path d="M0.5 1.2a1 1 0 0 1 1-1h2.6a1 1 0 0 1 1 1v2.2L2.8 5.3 0.5 3.4z" fill="#fff" stroke="#c3c3c3" stroke-width="0.6"/><path d="M1.6 2.4h2.4" stroke="#bdbdbd" stroke-width="0.5"/></svg>
<div class="no" style="top:316.89px">69</div>
<div class="ln" style="top:316.89px">        <span class="k">int</span> id = item.getItemId();</div>
<div class="no" style="top:325.20px">70</div>
<div class="no" style="top:333.51px">71</div>
<div class="ln" style="top:333.51px">        <span class="c">//noinspection SimplifiableIfStatement</span></div>
<div class="a" style="left:160.80px;top:341.82px;width:276.20px;height:8.31px;background:#fffae3;"></div>
<div class="no" style="top:341.82px">72</div>
<div class="ln" style="top:341.82px">        <span class="k">if</span> (id == R.id.<span class="fi">action_settings</span>) {</div>
<div class="no" style="top:350.13px">73</div>
<div class="ln" style="top:350.13px">            <span class="k">return true</span>;</div>
<div class="no" style="top:358.43px">74</div>
<div class="ln" style="top:358.43px">        }</div>
<div class="no" style="top:366.74px">75</div>
<div class="no" style="top:375.05px">76</div>
<div class="ln" style="top:375.05px">        <span class="k">return super</span>.onOptionsItemSelected(item);</div>
<div class="no" style="top:383.36px">77</div>
<div class="ln" style="top:383.36px">    }</div>
<svg class="a" style="left:186.00px;top:384.71px" width="5.6" height="5.6" viewBox="0 0 5.6 5.6"><path d="M0.5 1.2a1 1 0 0 1 1-1h2.6a1 1 0 0 1 1 1v2.2L2.8 5.3 0.5 3.4z" fill="#fff" stroke="#c3c3c3" stroke-width="0.6"/><path d="M1.6 2.4h2.4" stroke="#bdbdbd" stroke-width="0.5"/></svg>
</div>
<div class="a" style="left:11.60px;top:390.60px;width:425.40px;height:168.00px;background:#ececec;border-top:0.6px solid #c4c4c4"></div>
<div class="t" style="left:14.60px;top:393.00px;font-size:7.5px;color:#5a5a5a">Android Monitor</div>
<div class="a" style="left:29.60px;top:405.00px;width:259.00px;height:10.60px;background:#ffffff;border:0.5px solid #c6c6c6;border-radius:2px"></div>
<svg class="a" style="left:37.60px;top:406.80px" width="6.4" height="6.8" viewBox="0 0 6.4 6.8"><rect x="1.2" y="0.4" width="4" height="6" rx="0.6" fill="#dfe8f0" stroke="#6f7d8c" stroke-width="0.6"/><path d="M0.2 2v2.8M6.2 2v2.8" stroke="#3f86c8" stroke-width="0.6"/></svg>
<div class="t" style="left:47.60px;top:406.30px;font-size:7.65px;letter-spacing:-0.02px"><b style="font-weight:normal;color:#111">Emulator Nexus_4_API_22</b> <span style="color:#8a8a8a">Android 5.1 (API 22)</span></div>
<svg class="a" style="left:281.80px;top:406.80px" width="4.4" height="7" viewBox="0 0 4.4 7"><path d="M0.5 2.6L2.2 0.7l1.7 1.9M0.5 4.4l1.7 1.9 1.7-1.9" fill="none" stroke="#444" stroke-width="0.8"/></svg>
<div class="a" style="left:300.00px;top:405.00px;width:140.00px;height:10.60px;background:#ffffff;border:0.5px solid #c6c6c6;border-radius:2px"></div>
<div class="t" style="left:308.00px;top:406.30px;font-size:7.65px;color:#111"><b>ie.app</b> <span style="color:#8a8a8a">(1988)</span></div>
<div class="a" style="left:28.60px;top:419.20px;width:408.40px;height:18.40px;background:#ececec;border-top:0.5px solid #c9c9c9;border-bottom:0.5px solid #c4c4c4"></div>
<div class="a" style="left:28.60px;top:419.40px;width:209.00px;height:18.00px;background:#d4d4d4;"></div>
<div class="a" style="left:29.00px;top:419.40px;width:32.80px;height:18.40px;background:#ffffff;"></div>
<svg class="a" style="left:31.40px;top:426.20px" width="8.4" height="4.6" viewBox="0 0 8.4 4.6"><rect x="0" y="1" width="1.8" height="2.6" fill="#e0523f"/><rect x="2.2" y="0.4" width="1.8" height="3.6" fill="#7dbb4d"/><rect x="4.4" y="1" width="1.8" height="2.6" fill="#555"/><rect x="6.6" y="0.4" width="1.8" height="3.8" fill="#a05fc0"/></svg>
<div class="t" style="left:41.80px;top:425.40px;font-size:6.6px;color:#111">logcat</div>
<div class="a" style="left:61.50px;top:419.60px;width:0.60px;height:17.80px;background:#bcbcbc;"></div>
<svg class="a" style="left:66.20px;top:424.40px" width="8" height="7" viewBox="0 0 8 7"><path d="M0.4 0.4v6.2h7.2V1.2L5.4 4 3.6 2 1.8 4.4z" fill="#3f86c8"/></svg>
<div class="t" style="left:76.00px;top:425.40px;font-size:6.6px;color:#2a2a2a">Memory</div>
<svg class="a" style="left:103.40px;top:426.40px" width="6" height="4" viewBox="0 0 6 4"><path d="M0.2 2.2h3.2M2.4 1l1.2 1.2L2.4 3.4" fill="none" stroke="#666" stroke-width="0.6"/><path d="M4.6 0.4l0.5 1.2" stroke="#666" stroke-width="0.6"/></svg>
<div class="a" style="left:111.30px;top:419.60px;width:0.60px;height:17.80px;background:#bcbcbc;"></div>
<svg class="a" style="left:116.00px;top:424.40px" width="8" height="7" viewBox="0 0 8 7"><path d="M0.4 0.4v6.2h7.2V1.2L5.4 4 3.6 2 1.8 4.4z" fill="#d9343a"/></svg>
<div class="t" style="left:125.40px;top:425.40px;font-size:6.6px;color:#2a2a2a">CPU</div>
<svg class="a" style="left:141.20px;top:426.40px" width="6" height="4" viewBox="0 0 6 4"><path d="M0.2 2.2h3.2M2.4 1l1.2 1.2L2.4 3.4" fill="none" stroke="#666" stroke-width="0.6"/><path d="M4.6 0.4l0.5 1.2" stroke="#666" stroke-width="0.6"/></svg>
<div class="a" style="left:149.50px;top:419.60px;width:0.60px;height:17.80px;background:#bcbcbc;"></div>
<svg class="a" style="left:154.20px;top:424.40px" width="8" height="7" viewBox="0 0 8 7"><path d="M0.4 0.4v6.2h7.2V1.2L5.4 4 3.6 2 1.8 4.4z" fill="#6b3fb0"/></svg>
<div class="t" style="left:163.00px;top:425.40px;font-size:6.6px;color:#2a2a2a">GPU</div>
<svg class="a" style="left:179.00px;top:426.40px" width="6" height="4" viewBox="0 0 6 4"><path d="M0.2 2.2h3.2M2.4 1l1.2 1.2L2.4 3.4" fill="none" stroke="#666" stroke-width="0.6"/><path d="M4.6 0.4l0.5 1.2" stroke="#666" stroke-width="0.6"/></svg>
<div class="a" style="left:186.90px;top:419.60px;width:0.60px;height:17.80px;background:#bcbcbc;"></div>
<svg class="a" style="left:191.60px;top:424.40px" width="8" height="7" viewBox="0 0 8 7"><path d="M0.4 0.4v6.2h7.2V1.2L5.4 4 3.6 2 1.8 4.4z" fill="#f08a1e"/></svg>
<div class="t" style="left:201.00px;top:425.40px;font-size:6.6px;color:#2a2a2a">Network</div>
<svg class="a" style="left:229.00px;top:426.40px" width="6" height="4" viewBox="0 0 6 4"><path d="M0.2 2.2h3.2M2.4 1l1.2 1.2L2.4 3.4" fill="none" stroke="#666" stroke-width="0.6"/><path d="M4.6 0.4l0.5 1.2" stroke="#666" stroke-width="0.6"/></svg>
<div class="a" style="left:237.40px;top:419.60px;width:0.60px;height:17.80px;background:#bcbcbc;"></div>
<div class="t" style="left:364.60px;top:425.60px;font-size:7.9px;color:#222">Log level:</div>
<div class="a" style="left:406.60px;top:423.00px;width:40.00px;height:11.20px;background:#ffffff;border:0.5px solid #c6c6c6;border-radius:2px"></div>
<div class="t" style="left:412.60px;top:425.40px;font-size:7.9px;color:#222">Verbose</div>
<div class="a" style="left:11.60px;top:419.20px;width:17.00px;height:139.40px;background:#ececec;"></div>
<div class="a" style="left:28.40px;top:419.20px;width:0.50px;height:139.40px;background:#cfcfcf;"></div>
<div class="a" style="left:28.90px;top:437.80px;width:17.60px;height:120.80px;background:#ececec;"></div>
<div class="a" style="left:46.50px;top:437.80px;width:0.50px;height:120.80px;background:#cfcfcf;"></div>
<div class="a" style="left:47.00px;top:437.80px;width:390.00px;height:120.80px;background:#ffffff;"></div>
<svg class="a" style="left:15.20px;top:422.00px" width="8" height="8" viewBox="0 0 8 8"><rect x="0.4" y="1.6" width="7.2" height="5" rx="0.6" fill="#8a98a8"/><rect x="2.6" y="0.6" width="2.8" height="1.4" fill="#8a98a8"/><circle cx="4" cy="4.1" r="1.5" fill="#e9eef4"/><circle cx="4" cy="4.1" r="0.7" fill="#3f86c8"/></svg>
<svg class="a" style="left:15.20px;top:436.40px" width="8" height="8" viewBox="0 0 8 8"><rect x="0.5" y="0.8" width="7" height="6.4" rx="0.6" fill="#c9c9c9" stroke="#b2b2b2" stroke-width="0.5"/><rect x="2.6" y="2.8" width="2.8" height="2.4" fill="#9e9e9e"/></svg>
<svg class="a" style="left:15.20px;top:450.70px" width="8" height="8" viewBox="0 0 8 8"><rect x="1.2" y="0.6" width="6" height="4.6" fill="#eef3f8" stroke="#7a8796" stroke-width="0.7"/><circle cx="2.6" cy="5.4" r="2" fill="#dfe8f0" stroke="#6f7d8c" stroke-width="0.7"/><path d="M1.2 6.8L0.2 7.9" stroke="#6f7d8c" stroke-width="0.8"/></svg>
<svg class="a" style="left:15.20px;top:467.50px" width="8" height="8" viewBox="0 0 8 8"><circle cx="4" cy="4" r="3.5" fill="#e5484a"/><path d="M2.6 2.6l2.8 2.8M5.4 2.6L2.6 5.4" stroke="#fff" stroke-width="1"/></svg>
<svg class="a" style="left:31.70px;top:444.70px" width="8" height="8" viewBox="0 0 8 8"><path d="M1.2 2.4h5.6l-0.5 5.2H1.7z" fill="#4a9bd0"/><rect x="0.6" y="1.2" width="6.8" height="1" fill="#3a7fb2"/><rect x="2.8" y="0.3" width="2.4" height="1" fill="#3a7fb2"/></svg>
<svg class="a" style="left:31.70px;top:457.60px" width="8" height="8" viewBox="0 0 8 8"><rect x="0.4" y="1.2" width="6.4" height="5.8" fill="#e4e7ea" stroke="#9aa4ae" stroke-width="0.6"/><path d="M1.4 3h4M1.4 4.6h4" stroke="#9aa4ae" stroke-width="0.5"/><path d="M5 0.8h2.6v2.6" fill="none" stroke="#6b6b6b" stroke-width="0.7"/></svg>
<svg class="a" style="left:31.70px;top:472.00px" width="8" height="8" viewBox="0 0 8 8"><path d="M4 0.8L7 4.2H5.1v3H2.9v-3H1z" fill="#9a9a9a"/></svg>
<svg class="a" style="left:31.70px;top:486.00px" width="8" height="8" viewBox="0 0 8 8"><path d="M4 7.2L7 3.8H5.1v-3H2.9v3H1z" fill="#9a9a9a"/></svg>
<svg class="a" style="left:31.70px;top:500.00px" width="8" height="8" viewBox="0 0 8 8"><rect x="0.5" y="1" width="7" height="6" fill="#f2f6fa" stroke="#3f86c8" stroke-width="0.6" stroke-dasharray="1 0.8"/><path d="M1.6 4.6l1.6-1.6 1.4 1.2 1.8-2" fill="none" stroke="#3f86c8" stroke-width="0.7"/></svg>
<svg class="a" style="left:31.70px;top:513.40px" width="8" height="8" viewBox="0 0 8 8"><rect x="0.6" y="2.6" width="6.8" height="3.4" rx="0.6" fill="#4a9bd0"/><rect x="2" y="0.6" width="4" height="2" fill="#dfe8f0" stroke="#7a8796" stroke-width="0.4"/><rect x="2" y="5" width="4" height="2.4" fill="#fff" stroke="#7a8796" stroke-width="0.4"/></svg>
<svg class="a" style="left:31.70px;top:531.00px" width="8" height="8" viewBox="0 0 8 8"><path d="M6.4 2.2A3 3 0 1 0 6.8 5.4" fill="none" stroke="#35a745" stroke-width="1.2"/><path d="M4.6 0.2l2.6 1.8L4.6 3.8z" fill="#35a745"/><rect x="4.6" y="4.6" width="2.6" height="2.6" fill="#8a8a8a"/></svg>
<svg class="a" style="left:31.70px;top:544.30px" width="8" height="8" viewBox="0 0 8 8"><circle cx="4" cy="4" r="2" fill="none" stroke="#5a5a5a" stroke-width="1.5"/><path d="M4 0.3v7.4M0.3 4h7.4M1.4 1.4l5.2 5.2M6.6 1.4L1.4 6.6" stroke="#5a5a5a" stroke-width="0.9"/><circle cx="4" cy="4" r="1" fill="#ececec"/></svg>
<div class="a" style="left:30.50px;top:526.60px;width:14.00px;height:0.50px;background:#c9c9c9;"></div>
<div class="log">
<div class="t" style="left:49.40px;top:441.50px;">10-19 21:41:30.500 1988-1988/ie.app V/Donate: Really got the donate button</div>
<div class="t" style="left:49.40px;top:449.75px;">10-19 21:41:43.683 1988-1988/ie.app V/Donate: Donate Pressed! with amount 1000, method: Direct</div>
<div class="t" style="left:49.40px;top:458.00px;">10-19 21:41:43.683 1988-1988/ie.app V/Donate: Current total 1000</div>
<div class="t" style="left:49.40px;top:466.25px;">10-19 21:42:24.399 1988-1988/ie.app V/Donate: Donate Pressed! with amount 950, method: Direct</div>
<div class="t" style="left:49.40px;top:474.50px;">10-19 21:42:24.399 1988-1988/ie.app V/Donate: Current total 1950</div>
</div>
<div class="a" style="left:0.00px;top:558.40px;width:437.00px;height:11.20px;background:#ececec;border-top:0.5px solid #c9c9c9"></div>
<div class="a" style="left:116.80px;top:558.80px;width:79.00px;height:10.80px;background:#cfcfcf;"></div>
<svg class="a" style="left:16.20px;top:560.80px" width="7.4" height="6.6" viewBox="0 0 7.4 6.6"><rect x="0.3" y="0.3" width="6.8" height="6" fill="#5b5b5b"/><path d="M1.4 2l1.4 1.2L1.4 4.4M3.6 4.8h2" stroke="#fff" stroke-width="0.6" fill="none"/></svg>
<div class="t" style="left:25.60px;top:561.00px;font-size:6.8px;color:#222">Terminal</div>
<svg class="a" style="left:64.00px;top:560.80px" width="6.6" height="6.6" viewBox="0 0 6.6 6.6"><rect x="0.3" y="0.3" width="6" height="6" fill="#f1c27a" stroke="#c9964a" stroke-width="0.5"/><path d="M1.4 2h3.8M1.4 3.4h3.8M1.4 4.8h2.4" stroke="#a9743a" stroke-width="0.5"/></svg>
<div class="t" style="left:72.80px;top:561.00px;font-size:6.8px;color:#222"><u>0</u>: Messages</div>
<svg class="a" style="left:122.50px;top:560.50px" width="7.4" height="7.4" viewBox="0 0 10 10"><path d="M2 3.4a3 2.6 0 0 1 6 0z" fill="#7cb342"/><rect x="2" y="3.8" width="6" height="4.2" rx="0.6" fill="#7cb342"/><rect x="0.5" y="3.9" width="1.1" height="3.2" rx="0.5" fill="#7cb342"/><rect x="8.4" y="3.9" width="1.1" height="3.2" rx="0.5" fill="#7cb342"/><rect x="3" y="7.6" width="1.2" height="2" rx="0.5" fill="#7cb342"/><rect x="5.8" y="7.6" width="1.2" height="2" rx="0.5" fill="#7cb342"/><path d="M2.8 0.4l0.9 1.3M7.2 0.4L6.3 1.7" stroke="#7cb342" stroke-width="0.5"/></svg>
<div class="t" style="left:132.40px;top:561.00px;font-size:6.8px;color:#222"><u>6</u>: Android Monitor</div>
<svg class="a" style="left:202.20px;top:560.40px" width="7" height="7.6" viewBox="0 0 7 7.6"><path d="M0.5 0.3L6.6 3.8 0.5 7.3z" fill="#2fa84a"/></svg>
<div class="t" style="left:211.00px;top:561.00px;font-size:6.8px;color:#222"><u>4</u>: Run</div>
<svg class="a" style="left:241.40px;top:560.40px" width="7.6" height="7.6" viewBox="0 0 7.6 7.6"><circle cx="3.8" cy="2.2" r="1.8" fill="#f1c27a"/><path d="M1 7.4a2.8 3 0 0 1 5.6 0z" fill="#3f86c8"/><path d="M1.6 1.4h4.4" stroke="#8a5a2a" stroke-width="0.9"/></svg>
<div class="t" style="left:250.60px;top:561.00px;font-size:6.8px;color:#222">TODO</div>
<div class="a" style="left:177.20px;top:545.60px;width:77.00px;height:12.00px;background:#c6efc4;border:0.6px solid #9ccb9a;border-radius:2px"></div>
<svg class="a" style="left:209.60px;top:557.00px" width="10" height="5.4" viewBox="0 0 10 5.4"><path d="M0.4 0L5.4 5 8 0z" fill="#c6efc4"/><path d="M0.4 0.3L5.4 5 8 0.3" fill="none" stroke="#9ccb9a" stroke-width="0.6"/></svg>
<div class="t" style="left:183.80px;top:548.40px;font-size:6.9px;color:#111;letter-spacing:-0.035px">Session <span style="color:#2548d8;text-decoration:underline">'app'</span>: running</div>
<div class="a" style="left:0.00px;top:569.60px;width:437.00px;height:11.40px;background:linear-gradient(#ececec,#e2e2e2);border-top:0.5px solid #c4c4c4"></div>
<svg class="a" style="left:2.20px;top:572.00px" width="7.4" height="7" viewBox="0 0 7.4 7"><rect x="0.4" y="0.4" width="6.6" height="6.2" rx="0.8" fill="#dcdcdc" stroke="#7d7d7d" stroke-width="0.7"/></svg>
<div class="t" style="left:17.00px;top:572.40px;font-size:6.75px;color:#222">Session 'app': running (2 minutes ago)</div>
<div class="a" style="left:0.00px;top:581.00px;width:437.00px;height:27.00px;background:linear-gradient(#fdfdfd,#f4f4f4 60%,#e2e2e2);border-top:0.6px solid #9a9a9a"></div>
<div class="a" style="left:0.00px;top:581.40px;width:9.00px;height:26.40px;background:#f4f4f4;border-right:0.5px solid #b0b0b0"></div>
<div class="vt" style="left:0.4px;top:606.5px;font-size:5px;color:#444;line-height:8px;height:8px">-18- · · -17-</div>
<div class="a" style="left:9.40px;top:581.40px;width:146.80px;height:26.20px;background:linear-gradient(#8b95a3,#98a1ad);border-right:0.6px solid #6d7480"></div>
<div class="a" style="left:0.00px;top:607.80px;width:437.00px;height:16.00px;background:linear-gradient(#f6f6f6,#e4e4e4);border-top:0.6px solid #bdbdbd"></div>
<div class="a" style="left:0.00px;top:616.40px;width:437.00px;height:0.60px;background:#cfcfcf;"></div>
<div class="a" style="left:0.00px;top:608.40px;width:96.00px;height:14.40px;background:#ececec;border:0.5px solid #c2c2c2;border-radius:2px"></div>
<div class="a" style="left:46.80px;top:608.60px;width:15.40px;height:14.00px;background:#b4b6b9;border:0.5px solid #8f9499"></div>
<svg class="a" style="left:3.00px;top:612.00px" width="8" height="7" viewBox="0 0 8 7"><path d="M0.4 1h7.2M0.4 3.4h7.2M0.4 5.8h7.2" stroke="#6a6a6a" stroke-width="0.8"/></svg>
<svg class="a" style="left:18.00px;top:612.00px" width="8" height="7" viewBox="0 0 8 7"><path d="M0.4 1h7.2M0.4 3.4h7.2M0.4 5.8h7.2" stroke="#6a6a6a" stroke-width="0.8"/></svg>
<div class="a" style="left:13.80px;top:609.40px;width:0.50px;height:12.60px;background:#c9c9c9;"></div>
<svg class="a" style="left:33.60px;top:611.60px" width="8.8" height="7.4" viewBox="0 0 8.8 7.4"><rect x="0.5" y="0.5" width="7.8" height="6.4" rx="0.8" fill="#f2f2f2" stroke="#6a6a6a" stroke-width="0.9"/><rect x="2" y="2" width="4.8" height="3.4" fill="#6a6a6a" opacity="0.55"/></svg>
<div class="a" style="left:29.80px;top:609.40px;width:0.50px;height:12.60px;background:#c9c9c9;"></div>
<svg class="a" style="left:50.20px;top:611.60px" width="8.8" height="7.4" viewBox="0 0 8.8 7.4"><rect x="0.5" y="0.5" width="7.8" height="6.4" rx="0.8" fill="#f2f2f2" stroke="#5b9bd5" stroke-width="0.9"/><rect x="2" y="2" width="4.8" height="3.4" fill="#5b9bd5" opacity="0.55"/></svg>
<div class="a" style="left:47.00px;top:609.40px;width:0.50px;height:12.60px;background:#c9c9c9;"></div>
<svg class="a" style="left:64.60px;top:611.60px" width="8.8" height="7.4" viewBox="0 0 8.8 7.4"><rect x="0.5" y="0.5" width="7.8" height="6.4" rx="0.8" fill="#f2f2f2" stroke="#6a6a6a" stroke-width="0.9"/><rect x="2" y="2" width="4.8" height="3.4" fill="#6a6a6a" opacity="0.55"/></svg>
<div class="a" style="left:61.40px;top:609.40px;width:0.50px;height:12.60px;background:#c9c9c9;"></div>
<svg class="a" style="left:80.20px;top:611.60px" width="8.8" height="7.4" viewBox="0 0 8.8 7.4"><rect x="0.5" y="0.5" width="7.8" height="6.4" rx="0.8" fill="#f2f2f2" stroke="#6a6a6a" stroke-width="0.9"/><rect x="2" y="2" width="4.8" height="3.4" fill="#6a6a6a" opacity="0.55"/></svg>
<div class="a" style="left:77.00px;top:609.40px;width:0.50px;height:12.60px;background:#c9c9c9;"></div>
<div class="a" style="left:0.00px;top:623.80px;width:437.00px;height:4.00px;background:linear-gradient(#d8d8d8,#bdbdbd);"></div>
<div class="a" style="left:0.00px;top:627.60px;width:437.00px;height:2.40px;background:#16223f;"></div>
<div class="a" style="left:420.00px;top:1.60px;width:17.00px;height:626.00px;background:linear-gradient(90deg,rgba(0,0,0,0),rgba(0,0,0,0.05) 40%,rgba(0,0,0,0.16) 80%,rgba(0,0,0,0.32));"></div>
</div>
<div id="emu">
<div class="a" style="left:0;top:0;width:364px;height:1.6px;background:#0b0b0b"></div>
<div class="a" style="left:353.2px;top:0;width:3.4px;height:1.1px;background:#f2f2f2"></div>
<div class="a" style="left:358.8px;top:0;width:1.6px;height:1.1px;background:#d8d8d8"></div>
<div class="a" style="left:0;top:1.6px;width:361.4px;height:13px;background:linear-gradient(#f2f2f2,#e4e4e4 50%,#d6d6d6);border-bottom:0.6px solid #b4b4b4"></div>
<div class="a" style="left:4.7px;top:4.8px;width:6.8px;height:6.8px;border-radius:50%;background:#fc5b57;border:0.5px solid #e0443e"></div>
<div class="a" style="left:15.7px;top:4.8px;width:6.8px;height:6.8px;border-radius:50%;background:#fdbb2d;border:0.5px solid #dea123"></div>
<div class="a" style="left:26.9px;top:4.8px;width:6.8px;height:6.8px;border-radius:50%;background:#d4d4d4;border:0.5px solid #c2c2c2"></div>
<div class="t" style="left:100.8px;width:160px;text-align:center;top:4.6px;font-size:7.6px;color:#3a3a3a">5554:Nexus_4_API_22</div>
<div class="a" style="left:361.4px;top:1.6px;width:3px;height:628.4px;background:linear-gradient(#ececec 0,#e4e4e4 12px,#b8b8b8 14px,#b5b5b5 574px,#8b95a3 579px,#8b95a3 600px,#e2e2e2 602px,#dcdcdc 618px,#0a0a0a 620px)"></div>
<div class="a" style="left:0;top:14.6px;width:361.4px;height:614.2px;background:#808080"></div>
<div class="a" style="left:0;top:628.8px;width:361.4px;height:1.4px;background:#5c6068"></div>
<svg class="a" style="left:0;top:0" width="364" height="628.8" viewBox="0 0 364 628.8"><defs><clipPath id="bc"><path d="M19.8 77.6 C19.8 39.8 52.7 17.6 108.8 17.6 L253.1 17.6 C309.2 17.6 342.1 39.8 342.1 77.6 L342.1 589.5 C342.1 617.2 309.2 633.5 253.1 633.5 L108.8 633.5 C52.7 633.5 19.8 617.2 19.8 589.5 Z"/></clipPath><clipPath id="mc"><path d="M23.2 77.6 C23.2 43.3 54.9 23.2 108.8 23.2 L253.1 23.2 C307.0 23.2 338.7 43.3 338.7 77.6 L338.7 589.5 C338.7 615.3 307.0 630.5 253.1 630.5 L108.8 630.5 C54.9 630.5 23.2 615.3 23.2 589.5 Z"/></clipPath><linearGradient id="bg" gradientUnits="userSpaceOnUse" x1="0" y1="20" x2="0" y2="628"><stop offset="0" stop-color="#191919"/><stop offset="0.88" stop-color="#1b1b1b"/><stop offset="0.93" stop-color="#262626"/><stop offset="1" stop-color="#282828"/></linearGradient><linearGradient id="sw" gradientUnits="userSpaceOnUse" x1="19.8" y1="0" x2="342.1" y2="0"><stop offset="0.0105" stop-color="#3a3a3a"/><stop offset="0.0155" stop-color="#626262"/><stop offset="0.026" stop-color="#929292"/><stop offset="0.034" stop-color="#6c6c6c"/><stop offset="0.0405" stop-color="#2c2c2c"/><stop offset="0.07" stop-color="#8c8c8c"/><stop offset="0.93" stop-color="#8c8c8c"/><stop offset="0.9595" stop-color="#2c2c2c"/><stop offset="0.966" stop-color="#6c6c6c"/><stop offset="0.974" stop-color="#929292"/><stop offset="0.9845" stop-color="#626262"/><stop offset="0.9895" stop-color="#3a3a3a"/></linearGradient><linearGradient id="dk" gradientUnits="userSpaceOnUse" x1="0" y1="17" x2="0" y2="628"><stop offset="0" stop-color="#262626" stop-opacity="0"/><stop offset="0.12" stop-color="#262626" stop-opacity="0"/><stop offset="0.3" stop-color="#262626" stop-opacity="0.3"/><stop offset="0.55" stop-color="#262626" stop-opacity="0.7"/><stop offset="0.8" stop-color="#262626" stop-opacity="0.85"/><stop offset="1" stop-color="#262626" stop-opacity="0.92"/></linearGradient><linearGradient id="rl" gradientUnits="userSpaceOnUse" x1="0" y1="17" x2="0" y2="628"><stop offset="0" stop-color="#c8c8c8"/><stop offset="0.03" stop-color="#b4b4b4"/><stop offset="0.085" stop-color="#545454"/><stop offset="0.5" stop-color="#4c4c4c"/><stop offset="1" stop-color="#2c2c2c"/></linearGradient><linearGradient id="bl" gradientUnits="userSpaceOnUse" x1="0" y1="17" x2="0" y2="628"><stop offset="0" stop-color="#9a9a9a" stop-opacity="0"/><stop offset="0.9" stop-color="#9a9a9a" stop-opacity="0"/><stop offset="0.97" stop-color="#8c8c8c" stop-opacity="0.9"/><stop offset="1" stop-color="#8c8c8c" stop-opacity="1"/></linearGradient></defs><path d="M19.8 77.6 C19.8 39.8 52.7 17.6 108.8 17.6 L253.1 17.6 C309.2 17.6 342.1 39.8 342.1 77.6 L342.1 589.5 C342.1 617.2 309.2 633.5 253.1 633.5 L108.8 633.5 C52.7 633.5 19.8 617.2 19.8 589.5 Z" fill="#1c1c1c" stroke="#2a2a2a" stroke-width="0.8"/><g clip-path="url(#mc)"><path d="M23.2 77.6 C23.2 43.3 54.9 23.2 108.8 23.2 L253.1 23.2 C307.0 23.2 338.7 43.3 338.7 77.6 L338.7 589.5 C338.7 615.3 307.0 630.5 253.1 630.5 L108.8 630.5 C54.9 630.5 23.2 615.3 23.2 589.5 Z" fill="url(#sw)"/><path d="M23.2 77.6 C23.2 43.3 54.9 23.2 108.8 23.2 L253.1 23.2 C307.0 23.2 338.7 43.3 338.7 77.6 L338.7 589.5 C338.7 615.3 307.0 630.5 253.1 630.5 L108.8 630.5 C54.9 630.5 23.2 615.3 23.2 589.5 Z" fill="url(#dk)"/></g><g clip-path="url(#bc)"><path d="M19.8 77.6 C19.8 39.8 52.7 17.6 108.8 17.6 L253.1 17.6 C309.2 17.6 342.1 39.8 342.1 77.6 L342.1 589.5 C342.1 617.2 309.2 633.5 253.1 633.5 L108.8 633.5 C52.7 633.5 19.8 617.2 19.8 589.5 Z" fill="none" stroke="url(#rl)" stroke-width="6.6"/><path d="M19.8 77.6 C19.8 39.8 52.7 17.6 108.8 17.6 L253.1 17.6 C309.2 17.6 342.1 39.8 342.1 77.6 L342.1 589.5 C342.1 617.2 309.2 633.5 253.1 633.5 L108.8 633.5 C52.7 633.5 19.8 617.2 19.8 589.5 Z" fill="none" stroke="#2c2c2c" stroke-width="1.9"/><path d="M33.2 77.6 C33.2 38.2 52.9 24.3 108.8 24.3 L253.1 24.3 C307.3 24.3 338.5 43.8 338.5 77.6 L338.5 589.5 C338.5 614.8 307.3 629.3 253.1 629.3 L108.8 629.3 C52.9 629.3 33.2 619.0 33.2 589.5 Z" fill="url(#bg)"/><path d="M23.2 77.6 C23.2 43.3 54.9 23.2 108.8 23.2 L253.1 23.2 C307.0 23.2 338.7 43.3 338.7 77.6 L338.7 589.5 C338.7 615.3 307.0 630.5 253.1 630.5 L108.8 630.5 C54.9 630.5 23.2 615.3 23.2 589.5 Z" fill="none" stroke="url(#bl)" stroke-width="0.9"/></g></svg>
<div class="a" style="left:146.8px;top:24px;width:70px;height:7px;background:#2c2c2c;clip-path:polygon(0 0,100% 0,94% 100%,6% 100%);"></div>
<div class="a" style="left:52.3px;top:41px;width:8px;height:8px;border-radius:50%;background:#232323"></div>
<div class="a" style="left:63.8px;top:41px;width:8px;height:8px;border-radius:50%;background:#232323"></div>
<div class="a" style="left:291.3px;top:40px;width:10px;height:10px;border-radius:50%;background:#222226"></div>
<div class="a" style="left:295.3px;top:44px;width:2px;height:2px;border-radius:50%;background:#2c2c78"></div>
<div class="a" id="scr" style="left:35.0px;top:84.8px;width:290.7px;height:482.9px;background:#eeeeee;overflow:hidden">
<div class="a" style="left:0;top:0;width:100%;height:19.2px;background:#303f9f"></div>
<div class="a" style="left:0;top:19.2px;width:100%;height:42px;background:#3f51b5;box-shadow:0 1px 2px rgba(0,0,0,.35)"></div>
<div class="t" style="left:231.4px;top:4.4px;font-size:5px;font-weight:bold;color:#fff;letter-spacing:-0.1px">3G</div>
<svg class="a" style="left:234.1px;top:4.8px" width="10.2" height="10.2" viewBox="0 0 10 10"><path d="M10 0V10H0Z" fill="#fff"/><path d="M8.6 1.4V10" stroke="#9fa8da" stroke-width="0.5"/></svg>
<svg class="a" style="left:250.8px;top:4.1px" width="7.7" height="10.9" viewBox="0 0 7 10.4"><path d="M2.2 0h2.6v1H7v9.4H0V1h2.2z" fill="#fff"/><path d="M4.1 2.4L1.7 6h1.5l-.5 2.8L5.3 5H3.7z" fill="#303f9f"/></svg>
<div class="t" style="left:263.2px;top:5.5px;font-size:10.6px;font-weight:bold;color:#fff;letter-spacing:-0.1px">9:42</div>
<div class="t" style="left:12.6px;top:33.09px;font-size:15.6px;font-weight:bold;color:#fff;transform-origin:0 50%;transform:scaleX(0.918)">Donation.1.0</div>
<svg class="a" style="left:271.8px;top:33.7px" width="4" height="4" viewBox="0 0 4 4"><circle cx="2" cy="2" r="1.55" fill="#fff"/></svg>
<svg class="a" style="left:271.8px;top:38.4px" width="4" height="4" viewBox="0 0 4 4"><circle cx="2" cy="2" r="1.55" fill="#fff"/></svg>
<svg class="a" style="left:271.8px;top:43.1px" width="4" height="4" viewBox="0 0 4 4"><circle cx="2" cy="2" r="1.55" fill="#fff"/></svg>
<div class="t" style="left:12.2px;top:77.2px;font-size:16.5px;color:#141414;-webkit-text-stroke:0.2px #141414">Welcome Homer</div>
<div class="t" style="left:12.4px;top:120.0px;font-size:13.2px;color:#6f6f6f;-webkit-text-stroke:0.15px #6f6f6f">Please Give Generously</div>
<div class="a" style="left:16.4px;top:139.0px;width:15.4px;height:15.4px;border-radius:50%;border:1.75px solid #4e4e4e"></div>
<div class="t" style="left:36.8px;top:141.8px;font-size:10.6px;color:#111;-webkit-text-stroke:0.4px #111;letter-spacing:-0.1px">PayPal</div>
<div class="a" style="left:16.4px;top:163.2px;width:15.4px;height:15.4px;border-radius:50%;border:1.75px solid #4e4e4e"></div>
<div class="t" style="left:36.8px;top:166.0px;font-size:10.6px;color:#111;-webkit-text-stroke:0.4px #111;letter-spacing:-0.1px">Direct</div>
<div class="t" style="left:234.4px;width:40px;text-align:center;top:151.4px;font-size:13.4px;color:#9c9c9c;-webkit-text-stroke:0.2px #9c9c9c">949</div>
<div class="t" style="left:234.4px;width:40px;text-align:center;top:196.6px;font-size:13.4px;color:#151515;-webkit-text-stroke:0.2px #151515">950</div>
<div class="t" style="left:234.4px;width:40px;text-align:center;top:241.8px;font-size:13.4px;color:#9c9c9c;-webkit-text-stroke:0.2px #9c9c9c">951</div>
<div class="a" style="left:229.8px;top:182.6px;width:48.2px;height:1.6px;background:#55bbe8"></div>
<div class="a" style="left:229.8px;top:220.5px;width:48.2px;height:1.6px;background:#55bbe8"></div>
<div class="a" style="left:12.6px;top:355.9px;width:265.8px;height:1.9px;background:#c9c9c9"></div>
<div class="a" style="left:12.6px;top:355.9px;width:51.8px;height:1.9px;background:#ff3f80"></div>
<div class="a" style="left:114.8px;top:368.0px;width:61.2px;height:27.4px;border-radius:1.5px;background:#d6d7d7;box-shadow:0 0.6px 1.2px rgba(0,0,0,.4)"></div>
<div class="t" style="left:114.8px;width:61.2px;text-align:center;top:377.2px;font-size:10.3px;font-weight:bold;color:#1a1a1a;letter-spacing:-0.1px">DONATE</div>
<div class="a" style="left:236.0px;top:392.4px;width:42.4px;height:42.4px;border-radius:50%;background:#ff4081;box-shadow:0 2.5px 4px rgba(0,0,0,.28)"></div>
<svg class="a" style="left:247.75px;top:406.95px" width="19.3" height="13.3" viewBox="0 0 18 13"><rect width="18" height="13" rx="1" fill="#fff"/><path d="M0.8 1L9 7.4 17.2 1M0.8 12.2L6.6 6M17.2 12.2L11.4 6" stroke="#ff4081" stroke-width="1.3" fill="none"/></svg>
<div class="a" style="left:0;top:446.8px;width:100%;height:37px;background:#000"></div>
<svg class="a" style="left:53.3px;top:457.3px" width="15" height="15" viewBox="0 0 15 15"><path d="M11.3 1.6L2.2 7.5l9.1 5.9z" fill="none" stroke="#fff" stroke-width="1.7" stroke-linejoin="round"/></svg>
<div class="a" style="left:138.5px;top:458.1px;width:13.4px;height:13.4px;border-radius:50%;border:1.7px solid #fff"></div>
<div class="a" style="left:223.4px;top:458.6px;width:12.4px;height:12.4px;border-radius:1.2px;border:1.7px solid #fff"></div>
</div>
</div>
</body></html>
